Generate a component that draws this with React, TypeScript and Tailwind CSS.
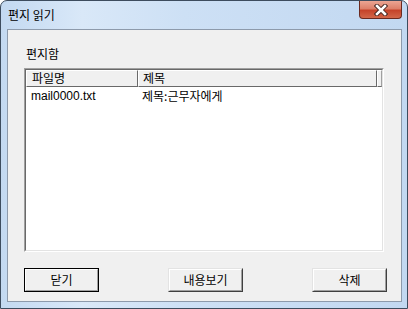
import React from "react";

const font = { fontFamily: '"Noto Sans CJK KR", "Liberation Sans", sans-serif' };

function Btn({ label, isDefault }: { label: string; isDefault?: boolean }) {
  return (
    <div
      className={
        "w-[75px] h-[24px] " +
        (isDefault ? "border border-black" : "border border-[#e3e3e3] border-r-[#404040] border-b-[#404040]")
      }
    >
      <div
        className={
          "w-full h-full flex items-center justify-center text-[12px] text-black bg-[#f0f0f0] border border-white border-r-[#a0a0a0] border-b-[#a0a0a0] " +
          (isDefault ? "border-r-[#696969] border-b-[#696969]" : "")
        }
      >
        {label}
      </div>
    </div>
  );
}

export default function App() {
  return (
    <div
      className="w-[408px] h-[309px] flex flex-col border border-[#3d4c5e] rounded-t-[7px] overflow-hidden bg-[linear-gradient(90deg,#c3d9f1_0%,#d9e8f8_20%,#cde0f5_45%,#c2d8f1_100%)]"
      style={font}
    >
      {/* title bar */}
      <div className="h-[28px] flex items-start justify-between pl-[7px] pr-[5px]">
        <span className="mt-[6px] text-[12px] leading-[16px] text-black">편지 읽기</span>
        <div className="w-[43px] h-[18px] rounded-b-[4px] border border-[#6b2a20] border-t-0 bg-[linear-gradient(180deg,#eba593_0%,#dc806a_45%,#c5432a_55%,#d2674a_100%)] flex items-center justify-center">
          <svg width="14" height="12" viewBox="0 0 14 12">
            <path d="M3 2 L11 10 M11 2 L3 10" stroke="#4a2a24" strokeWidth="4.5" strokeLinecap="square" />
            <path d="M3 2 L11 10 M11 2 L3 10" stroke="#ffffff" strokeWidth="2.5" strokeLinecap="square" />
          </svg>
        </div>
      </div>

      {/* client area */}
      <div className="flex-1 ml-[6px] mr-[5px] mb-[6px] border border-[#8d9aab] bg-[#f0f0f0] flex flex-col pt-[16px] pl-[16px]">
        <div className="pl-[2px] text-[12px] leading-[16px] text-black h-[22px]">편지함</div>

        {/* list view */}
        <div className="w-[360px] h-[184px] border border-[#a0a0a0] border-r-white border-b-white">
          <div className="w-full h-full border border-[#696969] border-r-[#e3e3e3] border-b-[#e3e3e3] bg-white flex flex-col">
            <div className="flex h-[17px] text-[12px] leading-[14px] text-black bg-[#f0f0f0]">
              <div className="w-[112px] border border-white border-r-[#696969] border-b-[#696969] pl-[5px]">파일명</div>
              <div className="w-[239px] border border-white border-r-[#696969] border-b-[#696969] pl-[4px]">제목</div>
              <div className="flex-1 border border-white border-r-[#a0a0a0] border-b-[#696969]" />
            </div>
            <div className="flex h-[16px] text-[12px] leading-[16px] text-black mt-[1px]">
              <div className="w-[112px] pl-[5px]" style={{ fontFamily: '"Liberation Sans", "Noto Sans CJK KR", sans-serif' }}>
                mail0000.txt
              </div>
              <div className="pl-[4px]">제목:근무자에게</div>
            </div>
          </div>
        </div>

        {/* buttons */}
        <div className="mt-[16px] flex w-[363px] justify-between">
          <Btn label="닫기" isDefault />
          <Btn label="내용보기" />
          <Btn label="삭제" />
        </div>
      </div>
    </div>
  );
}
